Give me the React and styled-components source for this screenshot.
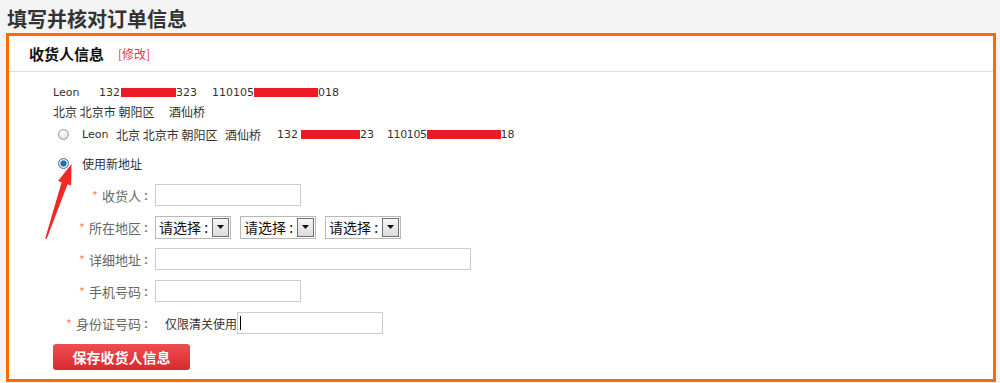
import styled, { createGlobalStyle } from 'styled-components'

const GlobalStyle = createGlobalStyle`
  html, body {
    margin: 0;
    padding: 0;
    background: #f4f4f4;
  }
  body {
    width: 1000px;
    height: 383px;
    overflow: hidden;
    font-family: 'DejaVu Sans', 'Noto Sans CJK SC', sans-serif;
    color: #333;
  }
`

const fields = [
  { label: '收货人', kind: 'input', width: 146 },
  { label: '所在地区', kind: 'select' },
  { label: '详细地址', kind: 'input', width: 316 },
  { label: '手机号码', kind: 'input', width: 146 },
  { label: '身份证号码', kind: 'id', width: 146 },
]

function Redacted({ w }) {
  return <Bar style={{ width: w }} />
}

function Select() {
  return (
    <SelectBox>
      <SelectText>请选择 :</SelectText>
      <SelectButton>
        <svg width='7' height='4' viewBox='0 0 7 4'>
          <path d='M0 0h7L3.5 4z' fill='#111' />
        </svg>
      </SelectButton>
    </SelectBox>
  )
}

function App() {
  return (
    <Page>
      <GlobalStyle />
      <Title>填写并核对订单信息</Title>
      <Panel>
        <PanelHead>
          <HeadTitle>收货人信息</HeadTitle>
          <EditLink>[修改]</EditLink>
        </PanelHead>
        <PanelBody>
          <InfoLine>
            <Cell $w={46}>Leon</Cell>
            <Cell $w={22}>132</Cell>
            <Redacted w={55} />
            <Cell $w={36}>323</Cell>
            <span>110105</span>
            <Redacted w={64} />
            <span>018</span>
          </InfoLine>
          <InfoLine $cjk>
            <Cell $w={116}>北京 北京市 朝阳区</Cell>
            <span>酒仙桥</span>
          </InfoLine>
          <RadioRow $top={3}>
            <Radio />
            <Text>
              <Cell $w={34}>Leon</Cell>
              <Cjk $w={109}>北京 北京市 朝阳区</Cjk>
              <Cjk $w={52}>酒仙桥</Cjk>
              <Cell $w={24}>132</Cell>
              <Redacted w={59} />
              <Cell $w={27}>23</Cell>
              <Num>110105</Num>
              <Redacted w={74} />
              <span>18</span>
            </Text>
          </RadioRow>
          <RadioRow $top={9}>
            <Radio $checked />
            <Cjk>使用新地址</Cjk>
          </RadioRow>
          <Form>
            {fields.map((f) => (
              <FormRow key={f.label}>
                <Label>
                  <Star>*</Star>
                  <span>{f.label}</span>
                  <Colon>:</Colon>
                </Label>
                {f.kind === 'input' && <Input style={{ width: f.width }} />}
                {f.kind === 'select' && (
                  <Selects>
                    <Select />
                    <Select />
                    <Select />
                  </Selects>
                )}
                {f.kind === 'id' && (
                  <>
                    <Note>仅限清关使用</Note>
                    <Input style={{ width: f.width }}>
                      <Caret />
                    </Input>
                  </>
                )}
              </FormRow>
            ))}
          </Form>
          <SaveButton>保存收货人信息</SaveButton>
        </PanelBody>
        <Arrow width='40' height='80' viewBox='0 0 40 80'>
          <path d='M3.2 76.5 L19.6 20.3 L16.1 18.9 L29.5 2 L29.1 23.5 L25.6 22.3 L4.6 77 Z' fill='#ee2a26' />
        </Arrow>
      </Panel>
    </Page>
  )
}

export default App

const Page = styled.div`
  width: 1000px;
  height: 383px;
  display: flex;
  flex-direction: column;
  box-sizing: border-box;
`
const Title = styled.h1`
  margin: 0;
  padding: 6px 0 0 7px;
  height: 27px;
  font-family: 'Noto Sans CJK SC', sans-serif;
  font-size: 20px;
  line-height: 26px;
  font-weight: 700;
  color: #333;
`
const Panel = styled.div`
  position: relative;
  margin-left: 6px;
  width: 990px;
  height: 349px;
  box-sizing: border-box;
  border: 3px solid #ff6a00;
  background: #fff;
`
const PanelHead = styled.div`
  height: 35px;
  display: flex;
  align-items: center;
  padding-left: 20px;
  gap: 14px;
  border-bottom: 1px solid #ddd;
  background: linear-gradient(#fafafa, #fff 30%);
`
const HeadTitle = styled.span`
  font-family: 'Noto Sans CJK SC', sans-serif;
  font-size: 15px;
  font-weight: 700;
  color: #111;
`
const EditLink = styled.span`
  font-family: 'Noto Sans CJK SC', sans-serif;
  font-size: 12px;
  color: #e4393c;
`
const PanelBody = styled.div`
  padding: 11px 0 0 44px;
  display: flex;
  flex-direction: column;
  align-items: flex-start;
`
const InfoLine = styled.div`
  height: 19px;
  display: flex;
  align-items: center;
  font-family: ${(p) => (p.$cjk ? "'Noto Sans CJK SC'" : "'DejaVu Sans', 'Noto Sans CJK SC'")}, sans-serif;
  font-size: ${(p) => (p.$cjk ? '12px' : '11px')};
  color: #333;
  white-space: pre;
`
const Cell = styled.span`
  display: inline-block;
  width: ${(p) => p.$w}px;
`
const Num = styled.span`
  letter-spacing: -0.4px;
`
const Bar = styled.span`
  display: inline-block;
  height: 9px;
  background: #ed1c24;
`
const RadioRow = styled.div`
  margin-top: ${(p) => p.$top}px;
  height: 20px;
  display: flex;
  align-items: center;
  padding-left: 5px;
  gap: 13px;
`
const Radio = styled.span`
  width: 11px;
  height: 11px;
  box-sizing: border-box;
  border-radius: 50%;
  border: 1px solid ${(p) => (p.$checked ? '#5a6a80' : '#9a9a9a')};
  background: ${(p) =>
    p.$checked
      ? 'radial-gradient(circle, #1d8fd6 0, #0a5fa8 2.5px, #e8eef4 3.5px, #c9ced6 100%)'
      : 'radial-gradient(circle at 40% 35%, #fff 0, #e6e6e6 60%, #c8c8c8 100%)'};
`
const Text = styled.span`
  display: flex;
  align-items: center;
  font-family: 'DejaVu Sans', 'Noto Sans CJK SC', sans-serif;
  font-size: 11px;
  color: #333;
  white-space: pre;
`
const Cjk = styled.span`
  display: inline-block;
  width: ${(p) => (p.$w ? `${p.$w}px` : 'auto')};
  font-family: 'Noto Sans CJK SC', sans-serif;
  font-size: 12px;
  color: #333;
  white-space: pre;
`
const Form = styled.div`
  margin-top: 11px;
  display: flex;
  flex-direction: column;
  gap: 10px;
`
const FormRow = styled.div`
  height: 22px;
  display: flex;
  align-items: center;
`
const Label = styled.span`
  width: 102px;
  padding-right: 4px;
  box-sizing: border-box;
  display: flex;
  align-items: center;
  justify-content: flex-end;
  font-family: 'Noto Sans CJK SC', sans-serif;
  font-size: 13px;
  color: #666;
  white-space: nowrap;
`
const Star = styled.span`
  margin-right: 5px;
  color: #f0783c;
  font-family: 'Liberation Sans', sans-serif;
  font-size: 11px;
`
const Colon = styled.span`
  width: 10px;
  text-align: center;
  font-family: 'Liberation Sans', sans-serif;
  font-size: 13px;
  font-weight: 700;
  color: #777;
`
const Input = styled.div`
  height: 22px;
  box-sizing: border-box;
  border: 1px solid #ccc;
  background: #fff;
  display: flex;
  align-items: center;
  padding-left: 2px;
`
const Caret = styled.span`
  width: 1px;
  height: 14px;
  background: #000;
`
const Note = styled.span`
  margin-left: 10px;
  font-family: 'Noto Sans CJK SC', sans-serif;
  font-size: 12px;
  color: #333;
`
const Selects = styled.div`
  display: flex;
  gap: 9px;
`
const SelectBox = styled.div`
  width: 76px;
  height: 23px;
  box-sizing: border-box;
  border: 1px solid #b8b8b8;
  display: flex;
  align-items: center;
  justify-content: space-between;
  padding: 0 1px 0 3px;
  background: #fff;
`
const SelectText = styled.span`
  font-family: 'Noto Sans CJK SC', sans-serif;
  font-size: 14px;
  color: #111;
  white-space: pre;
`
const SelectButton = styled.span`
  width: 17px;
  height: 19px;
  box-sizing: border-box;
  border: 1px solid #707070;
  background: linear-gradient(#f6f6f6, #dcdcdc);
  display: flex;
  align-items: center;
  justify-content: center;
`
const SaveButton = styled.button`
  margin-top: 10px;
  width: 137px;
  height: 26px;
  border: 0;
  border-radius: 3px;
  background: linear-gradient(#ee4d52, #d72a2f);
  color: #fff;
  font-family: 'Noto Sans CJK SC', sans-serif;
  font-size: 14px;
  font-weight: 700;
  padding: 0;
`
const Arrow = styled.svg`
  position: absolute;
  left: 33px;
  top: 126px;
`
